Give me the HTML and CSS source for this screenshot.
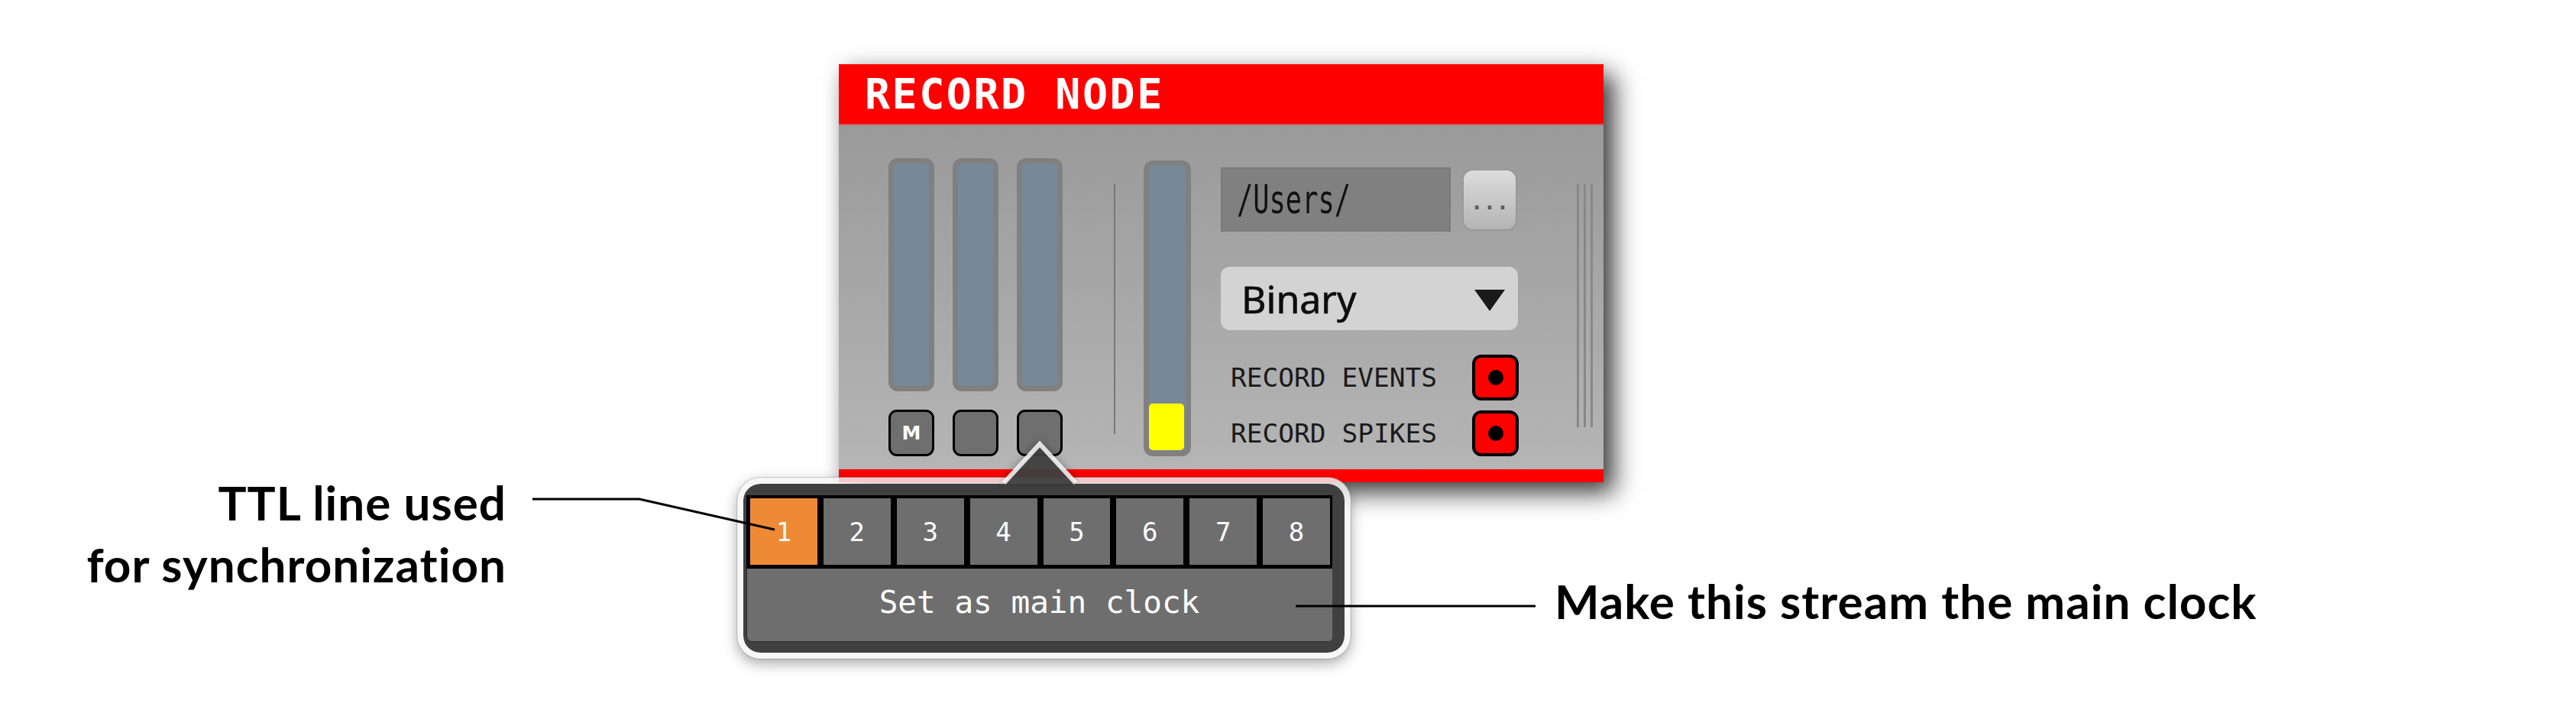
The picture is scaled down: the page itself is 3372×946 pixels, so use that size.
FILE: index.html
```html
<!DOCTYPE html>
<html>
<head>
<meta charset="utf-8">
<title>Record Node</title>
<link rel="stylesheet" href="styles.css">
</head>
<body>
<div class="stage">
  <div class="node">
    <div class="node-header"><span class="node-title">RECORD NODE</span></div>
    <div class="node-body">
      <div class="meters">
        <div class="meter-row">
          <div class="meter"></div>
          <div class="meter"></div>
          <div class="meter"></div>
        </div>
        <div class="stream-row">
          <div class="stream-btn">M</div>
          <div class="stream-btn"></div>
          <div class="stream-btn"></div>
        </div>
      </div>
      <div class="divider"></div>
      <div class="disk-meter"><div class="disk-fill"></div></div>
      <div class="controls">
        <div class="path-row">
          <div class="path-box"><span class="path-text">/Users/</span></div>
          <div class="browse-btn">...</div>
        </div>
        <div class="format-select"><span class="format-label">Binary</span><span class="caret"></span></div>
        <div class="toggle-row first">
          <span class="toggle-label">RECORD EVENTS</span>
          <div class="toggle"><span class="dot"></span></div>
        </div>
        <div class="toggle-row second">
          <span class="toggle-label">RECORD SPIKES</span>
          <div class="toggle"><span class="dot"></span></div>
        </div>
      </div>
      <div class="grip"><span></span><span></span><span></span></div>
    </div>
    <div class="node-footer"></div>
  </div>

  <div class="popup">
    <div class="ttl-row">
      <div class="ttl-cell active">1</div>
      <div class="ttl-cell">2</div>
      <div class="ttl-cell">3</div>
      <div class="ttl-cell">4</div>
      <div class="ttl-cell">5</div>
      <div class="ttl-cell">6</div>
      <div class="ttl-cell">7</div>
      <div class="ttl-cell">8</div>
    </div>
    <div class="main-clock-btn">Set as main clock</div>
  </div>
  <svg class="popup-arrow" width="122" height="66" viewBox="0 0 122 66">
    <polygon points="14,63 61,11 108,63" fill="rgba(64,64,64,0.94)"/>
    <polyline points="14,62 61,11 108,62" fill="none" stroke="rgba(245,245,245,0.88)" stroke-width="6" stroke-linejoin="miter"/>
  </svg>

  <div class="callout callout-left">TTL line used<br>for synchronization</div>
  <div class="callout callout-right">Make this stream the main clock</div>

  <svg class="leaders" width="3372" height="946" viewBox="0 0 3372 946">
    <polyline points="697,653 837,653 1014,693" fill="none" stroke="#000" stroke-width="3"/>
    <line x1="1696" y1="793" x2="2010" y2="793" stroke="#000" stroke-width="3"/>
  </svg>
</div>
</body>
</html>
```

FILE: styles.css
```css
html, body {
  margin: 0;
  padding: 0;
  background: #ffffff;
}

.stage {
  position: relative;
  width: 3372px;
  height: 946px;
  padding-top: 84px;
  box-sizing: border-box;
  overflow: hidden;
}

/* ---------- Record node ---------- */
.node {
  margin-left: 1098px;
  width: 1001px;
  display: flex;
  flex-direction: column;
  box-shadow: 14px 14px 30px rgba(0, 0, 0, 0.75), 0 0 24px rgba(0, 0, 0, 0.08);
}

.node-header {
  height: 80px;
  box-sizing: border-box;
  background: #ff0000;
  border-bottom: 2px solid #d05a5a;
  display: flex;
  align-items: center;
  padding-left: 34px;
}

.node-title {
  font-family: "DejaVu Sans Mono", monospace;
  font-weight: bold;
  font-size: 55px;
  line-height: 1;
  letter-spacing: 2.5px;
  color: #ffffff;
}

.node-body {
  height: 450px;
  box-sizing: border-box;
  display: flex;
  align-items: flex-start;
  padding-left: 65px;
  background: linear-gradient(#9a9a9a, #b5b5b5);
}

.node-footer {
  height: 17px;
  background: #ff0000;
}

/* meters */
.meters {
  margin-top: 43px;
  display: flex;
  flex-direction: column;
}

.meter-row,
.stream-row {
  display: flex;
  gap: 24px;
}

.meter {
  width: 60px;
  height: 305px;
  box-sizing: border-box;
  border: 7px solid #808080;
  border-radius: 12px;
  background: #778899;
}

.stream-row {
  margin-top: 24px;
}

.stream-btn {
  width: 60px;
  height: 61px;
  box-sizing: border-box;
  border: 3px solid #000000;
  border-radius: 11px;
  background: #6f6f6f;
  color: #ffffff;
  font-family: "DejaVu Sans", sans-serif;
  font-weight: bold;
  font-size: 25px;
  display: flex;
  align-items: center;
  justify-content: center;
}

.divider {
  width: 2px;
  height: 327px;
  margin-top: 77px;
  margin-left: 67px;
  background: #777777;
}

.disk-meter {
  margin-left: 37px;
  margin-top: 46px;
  width: 62px;
  height: 387px;
  box-sizing: border-box;
  border: 7px solid #808080;
  border-radius: 12px;
  background: #778899;
  display: flex;
  flex-direction: column;
  justify-content: flex-end;
  padding-bottom: 1px;
}

.disk-fill {
  width: 46px;
  height: 61px;
  border-radius: 5px;
  background: #ffff00;
}

/* controls column */
.controls {
  margin-left: 39px;
  margin-top: 55px;
  width: 390px;
  display: flex;
  flex-direction: column;
}

.path-row {
  display: flex;
  align-items: center;
  gap: 15px;
}

.path-box {
  width: 301px;
  height: 84px;
  box-sizing: border-box;
  background: #808080;
  box-shadow: inset 0 0 0 2px #7a7a7a;
  display: flex;
  align-items: center;
  padding-left: 21px;
  overflow: hidden;
}

.path-text {
  display: inline-block;
  font-family: "DejaVu Sans Mono", monospace;
  font-size: 52px;
  line-height: 1;
  color: #111111;
  transform: scaleX(0.68);
  transform-origin: left center;
}

.browse-btn {
  width: 72px;
  height: 81px;
  box-sizing: border-box;
  border: 2px solid #999999;
  border-radius: 14px;
  background: linear-gradient(#dcdcdc, #b4b4b4);
  display: flex;
  align-items: center;
  justify-content: center;
  padding-top: 6px;
  font-family: "DejaVu Sans Mono", monospace;
  font-weight: bold;
  font-size: 28px;
  color: #5e5e5e;
}

.format-select {
  margin-top: 46px;
  width: 389px;
  height: 83px;
  box-sizing: border-box;
  border-radius: 12px;
  background: #d3d3d3;
  display: flex;
  align-items: center;
  justify-content: space-between;
  padding: 0 17px 0 27px;
}

.format-label {
  font-family: "Noto Sans", sans-serif;
  font-size: 50px;
  color: #0d0d0d;
  -webkit-text-stroke: 0.6px #0d0d0d;
}

.caret {
  width: 0;
  height: 0;
  margin-top: 4px;
  border-left: 20px solid transparent;
  border-right: 20px solid transparent;
  border-top: 28px solid #1a1a1a;
}

.toggle-row {
  display: flex;
  align-items: center;
  justify-content: space-between;
  padding-left: 13px;
}

.toggle-row.first {
  margin-top: 32px;
}

.toggle-row.second {
  margin-top: 13px;
}

.toggle-label {
  font-family: "DejaVu Sans Mono", monospace;
  font-size: 34.5px;
  color: #1a1a1a;
}

.toggle {
  width: 61px;
  height: 60px;
  box-sizing: border-box;
  border: 4px solid #000000;
  border-radius: 12px;
  background: #ff0000;
  display: flex;
  align-items: center;
  justify-content: center;
}

.dot {
  width: 20px;
  height: 20px;
  border-radius: 50%;
  background: #000000;
}

.grip {
  margin-left: 76px;
  margin-top: 77px;
  height: 318px;
  display: flex;
  gap: 6px;
}

.grip span {
  width: 3px;
  background: #888888;
}

/* ---------- Popup ---------- */
.popup {
  position: absolute;
  left: 965px;
  top: 625px;
  width: 803px;
  height: 237px;
  box-sizing: border-box;
  border: 8px solid rgba(245, 245, 245, 0.82);
  border-radius: 30px;
  background: #404040;
  background-clip: padding-box;
  padding: 15px 16px 13px 4px;
  display: flex;
  flex-direction: column;
  box-shadow: 0 6px 18px rgba(0, 0, 0, 0.35), 0 0 0 1px rgba(190, 190, 190, 0.5);
}

.ttl-row {
  height: 96px;
  box-sizing: border-box;
  display: flex;
  gap: 8px;
  background: #000000;
  padding: 4px 3px 5px 5px;
}

.ttl-cell {
  flex: 1;
  background: #6e6e6e;
  color: #ffffff;
  font-family: "DejaVu Sans Mono", monospace;
  font-size: 34px;
  display: flex;
  align-items: center;
  justify-content: center;
}

.ttl-cell.active {
  background: #ee8a35;
}

.main-clock-btn {
  height: 96px;
  box-sizing: border-box;
  background: #6e6e6e;
  border-radius: 0 0 6px 6px;
  box-shadow: inset 1px -1px 0 #2a2a2a;
  color: #ffffff;
  font-family: "DejaVu Sans Mono", monospace;
  font-size: 41px;
  display: flex;
  align-items: center;
  justify-content: center;
  padding-bottom: 8px;
}

.popup-arrow {
  position: absolute;
  left: 1300px;
  top: 570px;
  overflow: visible;
  filter: drop-shadow(0 -1px 5px rgba(0, 0, 0, 0.3));
}

/* ---------- Callouts ---------- */
.callout {
  position: absolute;
  font-family: Lato, "Noto Sans", sans-serif;
  font-weight: 700;
  font-size: 62px;
  line-height: 81px;
  letter-spacing: 1px;
  color: #000000;
  white-space: nowrap;
}

.callout-left {
  left: 63px;
  top: 617px;
  width: 600px;
  text-align: right;
}

.callout-right {
  left: 2035px;
  top: 746px;
}

.leaders {
  position: absolute;
  left: 0;
  top: 0;
  pointer-events: none;
}
```
